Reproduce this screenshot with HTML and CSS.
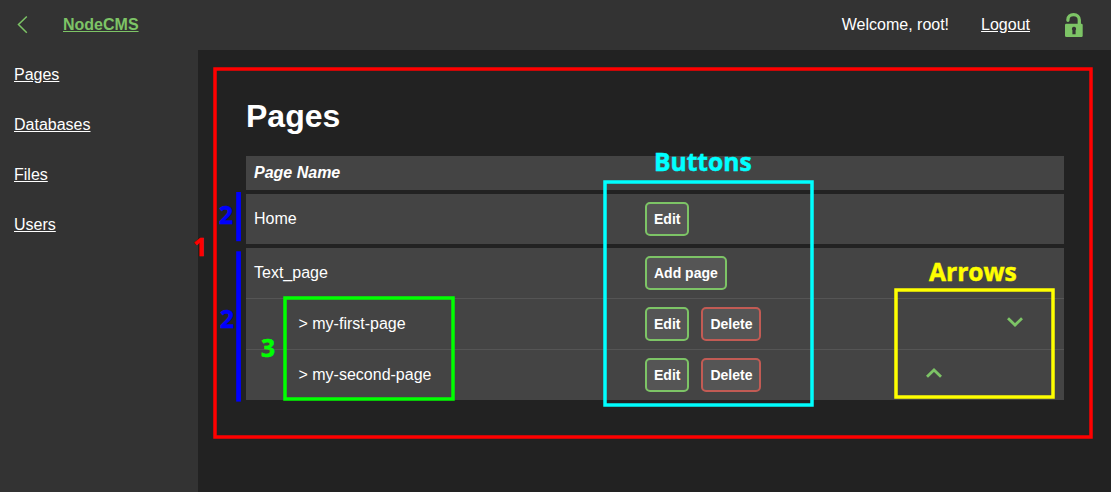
FILE: index.html
```html
<!DOCTYPE html>
<html lang="en">
<head>
<meta charset="utf-8">
<title>NodeCMS</title>
<link rel="stylesheet" href="styles.css">
</head>
<body>
<header class="topbar">
  <svg class="back" width="12" height="20" viewBox="0 0 12 20"><path d="M9.800 1.500 1.500 9.500 9.800 17.700"/></svg>
  <a class="brand" href="#">NodeCMS</a>
  <span class="welcome">Welcome, root!</span>
  <a class="logout" href="#">Logout</a>
  <svg class="lock" width="20" height="26" viewBox="0 0 20 26">
    <path class="shackle" d="M3.9 8.300V7.800C3.900 4.700 6.200 2.700 9.600 2.700S15.300 4.900 15.300 8v4"/>
    <path class="body" fill-rule="evenodd" d="M2.500 11.700h14.900q1.300 0 1.300 1.300v10.700q0 1.300-1.300 1.300H2.500Q1 25 1 23.700v-10.700Q1 11.700 2.500 11.700zM10 14.800a2.100 2.100 0 0 0-1.600 3.500v3.900h3.200v-3.900a2.100 2.100 0 0 0-1.600-3.500z"/>
  </svg>
</header>
<div class="layout">
  <nav class="sidebar">
    <a href="#">Pages</a>
    <a href="#">Databases</a>
    <a href="#">Files</a>
    <a href="#">Users</a>
  </nav>
  <main class="content">
    <h1>Pages</h1>
    <div class="table">
      <div class="group head">Page Name</div>
      <div class="group">
        <div class="row"><span class="name">Home</span><span class="actions"><button class="btn">Edit</button></span></div>
      </div>
      <div class="group">
        <div class="row"><span class="name">Text_page</span><span class="actions"><button class="btn">Add page</button></span></div>
        <div class="row child">
          <span class="name">&gt; my-first-page</span>
          <span class="actions"><button class="btn">Edit</button><button class="btn danger">Delete</button></span>
          <span class="order"></span>
          <span class="order"><svg class="chevron" width="18" height="12" viewBox="0 0 18 12"><path d="M2 2.300 9 9.100 16 2.300"/></svg></span>
        </div>
        <div class="row child">
          <span class="name">&gt; my-second-page</span>
          <span class="actions"><button class="btn">Edit</button><button class="btn danger">Delete</button></span>
          <span class="order"><svg class="chevron" width="18" height="12" viewBox="0 0 18 12"><path d="M2 9.700 9 2.900 16 9.700"/></svg></span>
          <span class="order"></span>
        </div>
      </div>
    </div>
  </main>
</div>
<svg class="notes" width="1111" height="492" viewBox="0 0 1111 492">
  <g class="frames">
    <rect class="red" x="215" y="69" width="876" height="368"/>
    <rect class="cyan" x="605" y="182" width="207" height="223"/>
    <rect class="green" x="285" y="298" width="168" height="101"/>
    <rect class="yellow" x="896" y="290" width="157" height="107"/>
  </g>
  <g class="bars">
    <rect x="236.200" y="192" width="4.700" height="49.200"/>
    <rect x="236.200" y="251.300" width="4.700" height="150.300"/>
  </g>
  <g class="labels">
    <text class="t-red" x="193" y="256">1</text>
    <text class="t-blue" x="219" y="224">2</text>
    <text class="t-blue" x="220" y="328">2</text>
    <text class="t-green" x="261" y="357">3</text>
    <text class="t-cyan" x="654" y="171">Buttons</text>
    <text class="t-yellow" x="929" y="281">Arrows</text>
  </g>
</svg>
</body>
</html>
```
FILE: styles.css
```css
* { box-sizing: border-box; }
body {
  margin: 0;
  height: 492px;
  overflow: hidden;
  position: relative;
  background: #222;
  color: #fff;
  font: 16px/18px "Liberation Sans", Arial, sans-serif;
}
a { color: inherit; }
.topbar {
  display: flex;
  align-items: center;
  height: 50px;
  padding: 0 27px 0 17px;
  background: #333;
}
.back { fill: none; stroke: #7dc466; stroke-width: 1.5; }
.brand { margin-left: 34px; color: #7dc466; font-weight: bold; }
.welcome { margin-left: auto; }
.logout { margin: 0 34px 0 32px; }
.shackle { fill: none; stroke: #7dc466; stroke-width: 3.3; stroke-linecap: round; }
.body { fill: #7dc466; }
.layout { display: flex; height: 442px; }
.sidebar {
  display: flex;
  flex-direction: column;
  align-items: flex-start;
  gap: 32px;
  width: 198px;
  padding: 16px 14px;
  background: #333;
}
.content { flex: 1; padding: 48px 47px 0 48px; }
h1 { margin: 0 0 22px; font-size: 32px; line-height: 36px; }
.table { display: flex; flex-direction: column; gap: 4px; }
.group { background: #444; }
.head { height: 34px; padding: 8px; font-weight: bold; font-style: italic; }
.row { display: flex; align-items: center; height: 50px; padding-left: 8px; }
.name { width: 391px; }
.child { height: 51px; border-top: 1px solid #555; }
.child .name { padding-left: 44.500px; }
.actions { display: flex; gap: 12px; width: 248px; }
.order { display: flex; justify-content: center; width: 81px; padding-bottom: 4px; }
.btn {
  height: 34px;
  padding: 0 7px;
  border: 2px solid #7dc466;
  border-radius: 5px;
  background: #555;
  color: #fff;
  font: bold 14px "Liberation Sans", Arial, sans-serif;
}
.danger { border-color: #c25b54; }
.chevron { fill: none; stroke: #7dc466; stroke-width: 2.800; }
.notes { position: absolute; top: 0; left: 0; pointer-events: none; }
.frames { fill: none; stroke-width: 3.500; }
.red { stroke: #f00; }
.cyan { stroke: #0ff; }
.green { stroke: #0f0; }
.yellow { stroke: #ff0; }
.bars { fill: #00f; }
.labels { font: bold 24.600px "Open Sans", sans-serif; stroke-width: .5; }
.t-red { fill: #f00; stroke: #f00; }
.t-blue { fill: #00f; stroke: #00f; }
.t-green { fill: #0f0; stroke: #0f0; }
.t-cyan { fill: #0ff; stroke: #0ff; }
.t-yellow { fill: #ff0; stroke: #ff0; }
```
